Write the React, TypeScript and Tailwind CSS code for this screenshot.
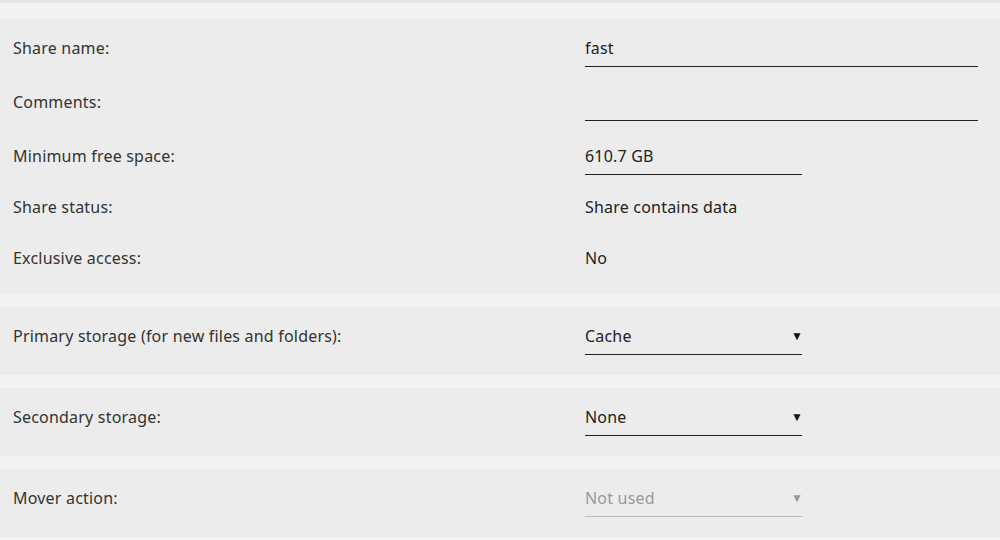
const font = { fontFamily: '"Noto Sans", "Open Sans", sans-serif' };

function Label({ text }: { text: string }) {
  return <div className="w-[585px] shrink-0 pl-[13px] text-[16px] tracking-[0.2px] text-[#333]">{text}</div>;
}

function TextInput({ value, wide }: { value: string; wide?: boolean }) {
  return (
    <div
      className={
        "flex h-[38px] items-center border-b border-[#222] text-[16px] tracking-[0.2px] text-[#222] " +
        (wide ? "w-[393px]" : "w-[217px]")
      }
    >
      {value}
    </div>
  );
}

function Select({ value, disabled }: { value: string; disabled?: boolean }) {
  return (
    <div
      className={
        "flex h-[38px] w-[217px] items-center justify-between border-b text-[16px] tracking-[0.2px] " +
        (disabled ? "border-[#bbb] text-[#999]" : "border-[#222] text-[#222]")
      }
    >
      <span>{value}</span>
      <span className={"-mr-[1px] text-[12px] " + (disabled ? "text-[#999]" : "text-[#111]")}>▼</span>
    </div>
  );
}

function Row({ label, children, className }: { label: string; children: React.ReactNode; className?: string }) {
  return (
    <div className={"flex h-[38px] items-center " + (className ?? "")}>
      <Label text={label} />
      {children}
    </div>
  );
}

export default function App() {
  return (
    <div className="h-[540px] w-[1000px] overflow-hidden bg-[#f2f2f2]" style={font}>
      <div className="h-[3px] bg-[#e5e5e5]" />
      <div className="mt-[16px] bg-[#ececec] pb-[17px] pt-[10px]">
        <Row label="Share name:">
          <TextInput value="fast" wide />
        </Row>
        <Row label="Comments:" className="mt-[16px]">
          <TextInput value="" wide />
        </Row>
        <Row label="Minimum free space:" className="mt-[16px]">
          <TextInput value="610.7 GB" />
        </Row>
        <Row label="Share status:" className="mt-[13px]">
          <span className="text-[16px] tracking-[0.2px] text-[#222]">Share contains data</span>
        </Row>
        <Row label="Exclusive access:" className="mt-[13px]">
          <span className="text-[16px] tracking-[0.2px] text-[#222]">No</span>
        </Row>
      </div>

      <div className="mt-[13px] bg-[#ececec] pb-[20px] pt-[10px]">
        <Row label="Primary storage (for new files and folders):">
          <Select value="Cache" />
        </Row>
      </div>

      <div className="mt-[13px] bg-[#ececec] pb-[20px] pt-[10px]">
        <Row label="Secondary storage:">
          <Select value="None" />
        </Row>
      </div>

      <div className="mt-[13px] bg-[#ececec] pb-[20px] pt-[10px]">
        <Row label="Mover action:">
          <Select value="Not used" disabled />
        </Row>
      </div>
    </div>
  );
}
